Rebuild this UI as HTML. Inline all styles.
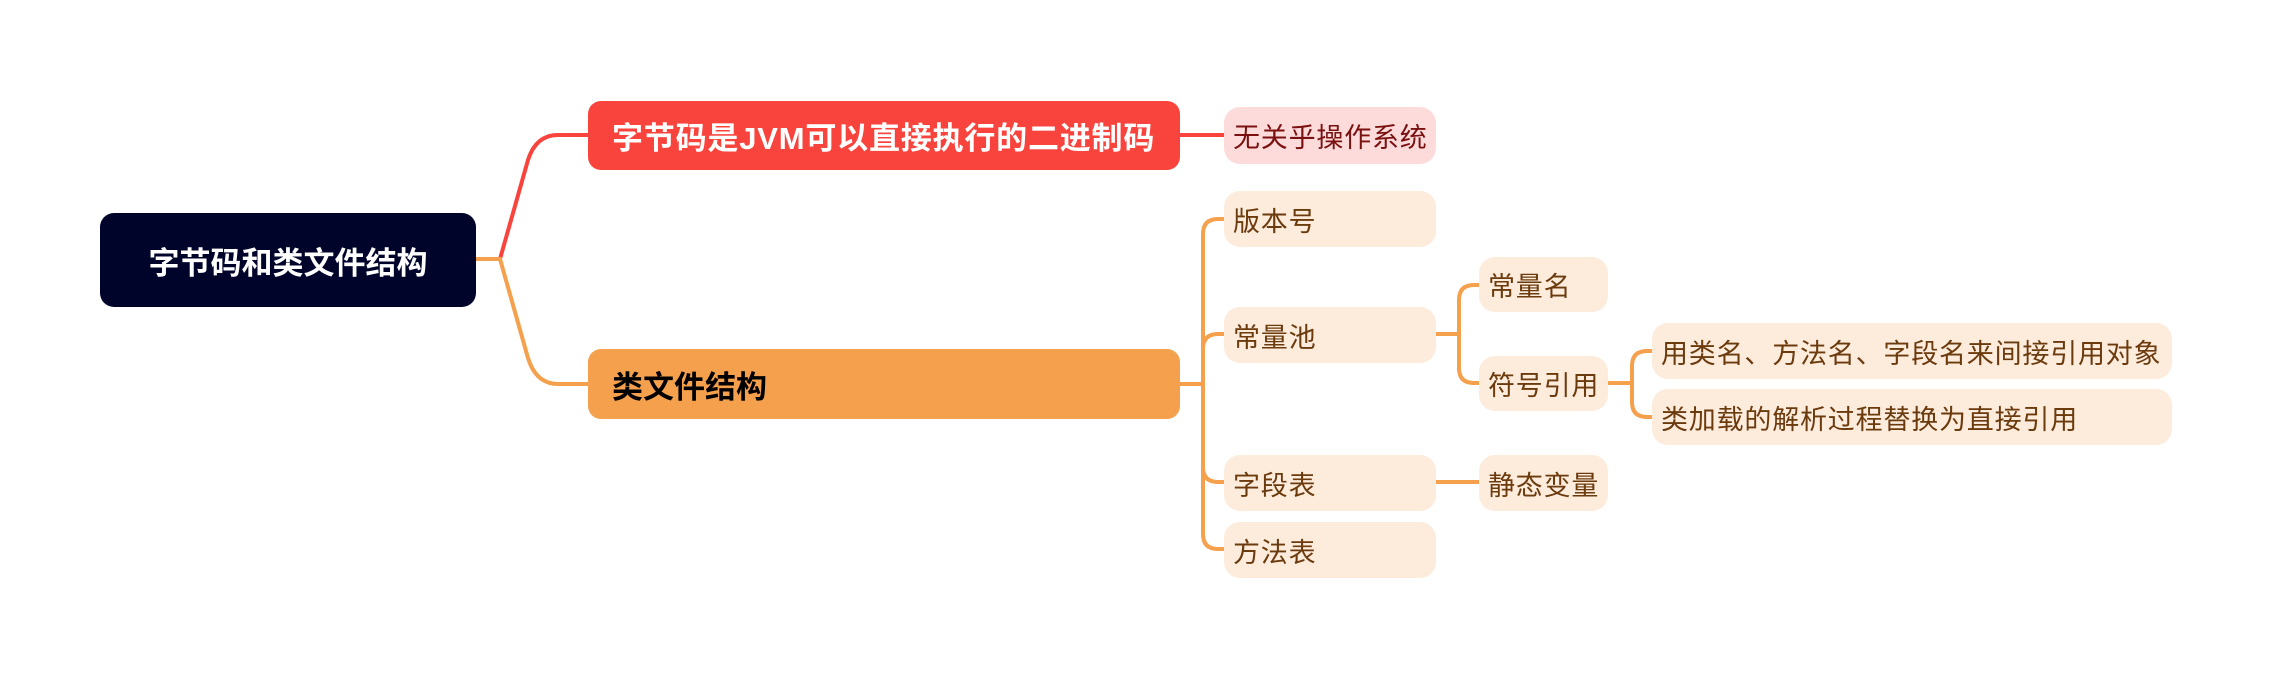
<!DOCTYPE html>
<html><head><meta charset="utf-8"><style>
html,body{margin:0;padding:0;background:#fff;width:2272px;height:678px;overflow:hidden;position:relative;font-family:"Liberation Sans","Noto Sans CJK SC",sans-serif}
.b{position:absolute;box-sizing:border-box;display:flex;align-items:center;white-space:nowrap}
.c{background:#fdebdc;color:#6b3a0d;font-size:27px;letter-spacing:0.8px;border-radius:16px;padding-left:9px}
svg{position:absolute;left:0;top:0}
</style></head><body>
<svg width="2272" height="678" fill="none" stroke-width="4" stroke-linecap="round">
<path d="M475 259 H500 L528 160 Q536 135 558 135 H588" stroke="#f9443e"/>
<path d="M1180 135 H1224" stroke="#f9443e"/>
<path d="M475 259 H500 L528 358 Q536 384 558 384 H588" stroke="#f5a04c"/>
<g stroke="#f5a04c">
<path d="M1180 384 H1203"/>
<path d="M1224 219 H1218 Q1203 219 1203 234 V534 Q1203 549 1218 549 H1224"/>
<path d="M1203 349 Q1203 334 1218 334 H1224"/>
<path d="M1203 467 Q1203 482 1218 482 H1224"/>
<path d="M1435 334 H1459"/>
<path d="M1479 285 H1474 Q1459 285 1459 300 V368 Q1459 383 1474 383 H1479"/>
<path d="M1435 482 H1479"/>
<path d="M1608 383 H1632"/>
<path d="M1652 351 H1647 Q1632 351 1632 366 V402 Q1632 417 1647 417 H1652"/>
</g>
</svg>
<div class="b" style="left:100px;top:213px;width:376px;height:94px;background:#00032a;color:#fff;border-radius:14px;font-size:31px;font-weight:bold;justify-content:center">字节码和类文件结构</div>
<div class="b" style="left:588px;top:101px;width:592px;height:69px;background:#f9443e;color:#fff;border-radius:13px;font-size:31px;letter-spacing:0.8px;font-weight:bold;padding-left:24px">字节码是JVM可以直接执行的二进制码</div>
<div class="b" style="left:588px;top:349px;width:592px;height:70px;background:#f5a04c;color:#000;border-radius:13px;font-size:31px;font-weight:bold;padding-left:24px">类文件结构</div>
<div class="b c" style="left:1224px;top:107px;width:212px;height:57px;background:#fddbdb;color:#7a1010">无关乎操作系统</div>
<div class="b c" style="left:1224px;top:191px;width:212px;height:56px">版本号</div>
<div class="b c" style="left:1224px;top:307px;width:212px;height:56px">常量池</div>
<div class="b c" style="left:1224px;top:455px;width:212px;height:56px">字段表</div>
<div class="b c" style="left:1224px;top:522px;width:212px;height:56px">方法表</div>
<div class="b c" style="left:1479px;top:257px;width:129px;height:55px">常量名</div>
<div class="b c" style="left:1479px;top:356px;width:129px;height:55px">符号引用</div>
<div class="b c" style="left:1479px;top:455px;width:129px;height:56px">静态变量</div>
<div class="b c" style="left:1652px;top:323px;width:520px;height:56px">用类名、方法名、字段名来间接引用对象</div>
<div class="b c" style="left:1652px;top:389px;width:520px;height:56px">类加载的解析过程替换为直接引用</div>
</body></html>
